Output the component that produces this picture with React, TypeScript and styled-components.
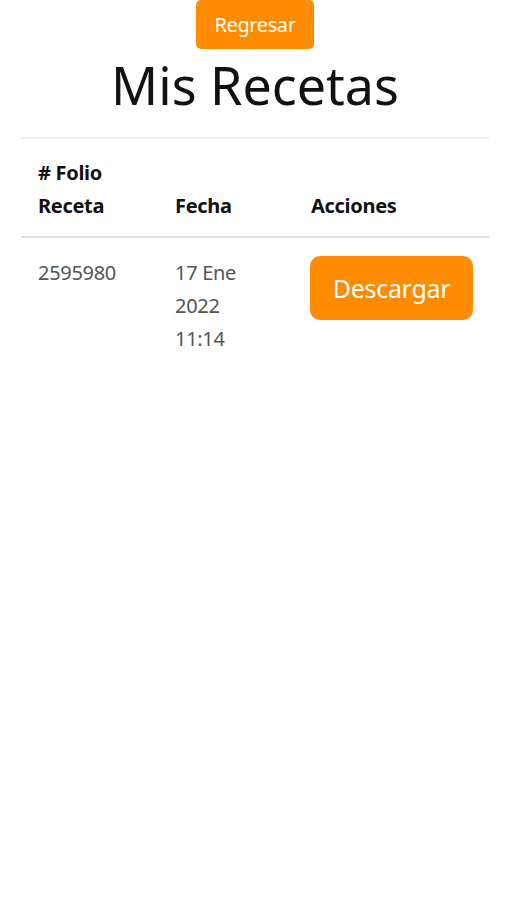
import React from "react";
import styled, {createGlobalStyle} from "styled-components";

const recetas = [
    {folio: "2595980", fecha: ["17 Ene", "2022", "11:14"]},
]

export default function App() {
    return (
        <Page>
            <GlobalStyle/>
            <BackButton>Regresar</BackButton>
            <Title>Mis Recetas</Title>
            <Table>
                <colgroup>
                    <col style={{width: '137px'}}/>
                    <col style={{width: '136px'}}/>
                    <col/>
                </colgroup>
                <thead>
                <tr>
                    <Th># Folio<br/>Receta</Th>
                    <Th>Fecha</Th>
                    <Th>Acciones</Th>
                </tr>
                </thead>
                <tbody>
                {recetas.map(r =>
                    <tr key={r.folio}>
                        <Td>{r.folio}</Td>
                        <Td>{r.fecha.map(l => <div key={l}>{l}</div>)}</Td>
                        <Td><DownloadButton>Descargar</DownloadButton></Td>
                    </tr>)}
                </tbody>
            </Table>
        </Page>
    )
}

//styled-components
const GlobalStyle = createGlobalStyle`
  body {
    margin: 0;
    background: #fff;
    font-family: "Noto Sans", "Open Sans", sans-serif;
  }
`
const Page = styled.div`
  display: flex;
  flex-direction: column;
  align-items: center;
  padding: 0 21px;
`
const BackButton = styled.button`
  width: 118px;
  height: 49px;
  border: none;
  border-radius: 5px;
  background: #ff8c00;
  color: #fff;
  font-family: "Noto Sans", sans-serif;
  font-size: 20px;
  letter-spacing: -0.4px;
  padding: 0;
`
const Title = styled.h1`
  margin: 4px 0 20px;
  font-family: "Noto Sans", sans-serif;
  font-weight: 400;
  font-size: 52px;
  line-height: 64px;
  color: #111;
`
const Table = styled.table`
  width: 468px;
  border-collapse: collapse;
  table-layout: fixed;
`
const Th = styled.th`
  text-align: left;
  vertical-align: bottom;
  padding: 17px 17px 14px;
  border-top: 2px solid #eeeeee;
  border-bottom: 2px solid #e4e4e4;
  font-size: 20px;
  font-weight: 700;
  line-height: 33px;
  color: #111;
  letter-spacing: -0.3px;
`
const Td = styled.td`
  vertical-align: top;
  padding: 18px 17px;
  font-size: 20px;
  line-height: 33px;
  color: #555;
  letter-spacing: -0.3px;
`
const DownloadButton = styled.button`
  margin-left: -1px;
  width: 163px;
  height: 64px;
  border: none;
  border-radius: 10px;
  background: #ff8c00;
  color: #fff;
  font-family: "Noto Sans", sans-serif;
  font-size: 25px;
  letter-spacing: -0.3px;
`
